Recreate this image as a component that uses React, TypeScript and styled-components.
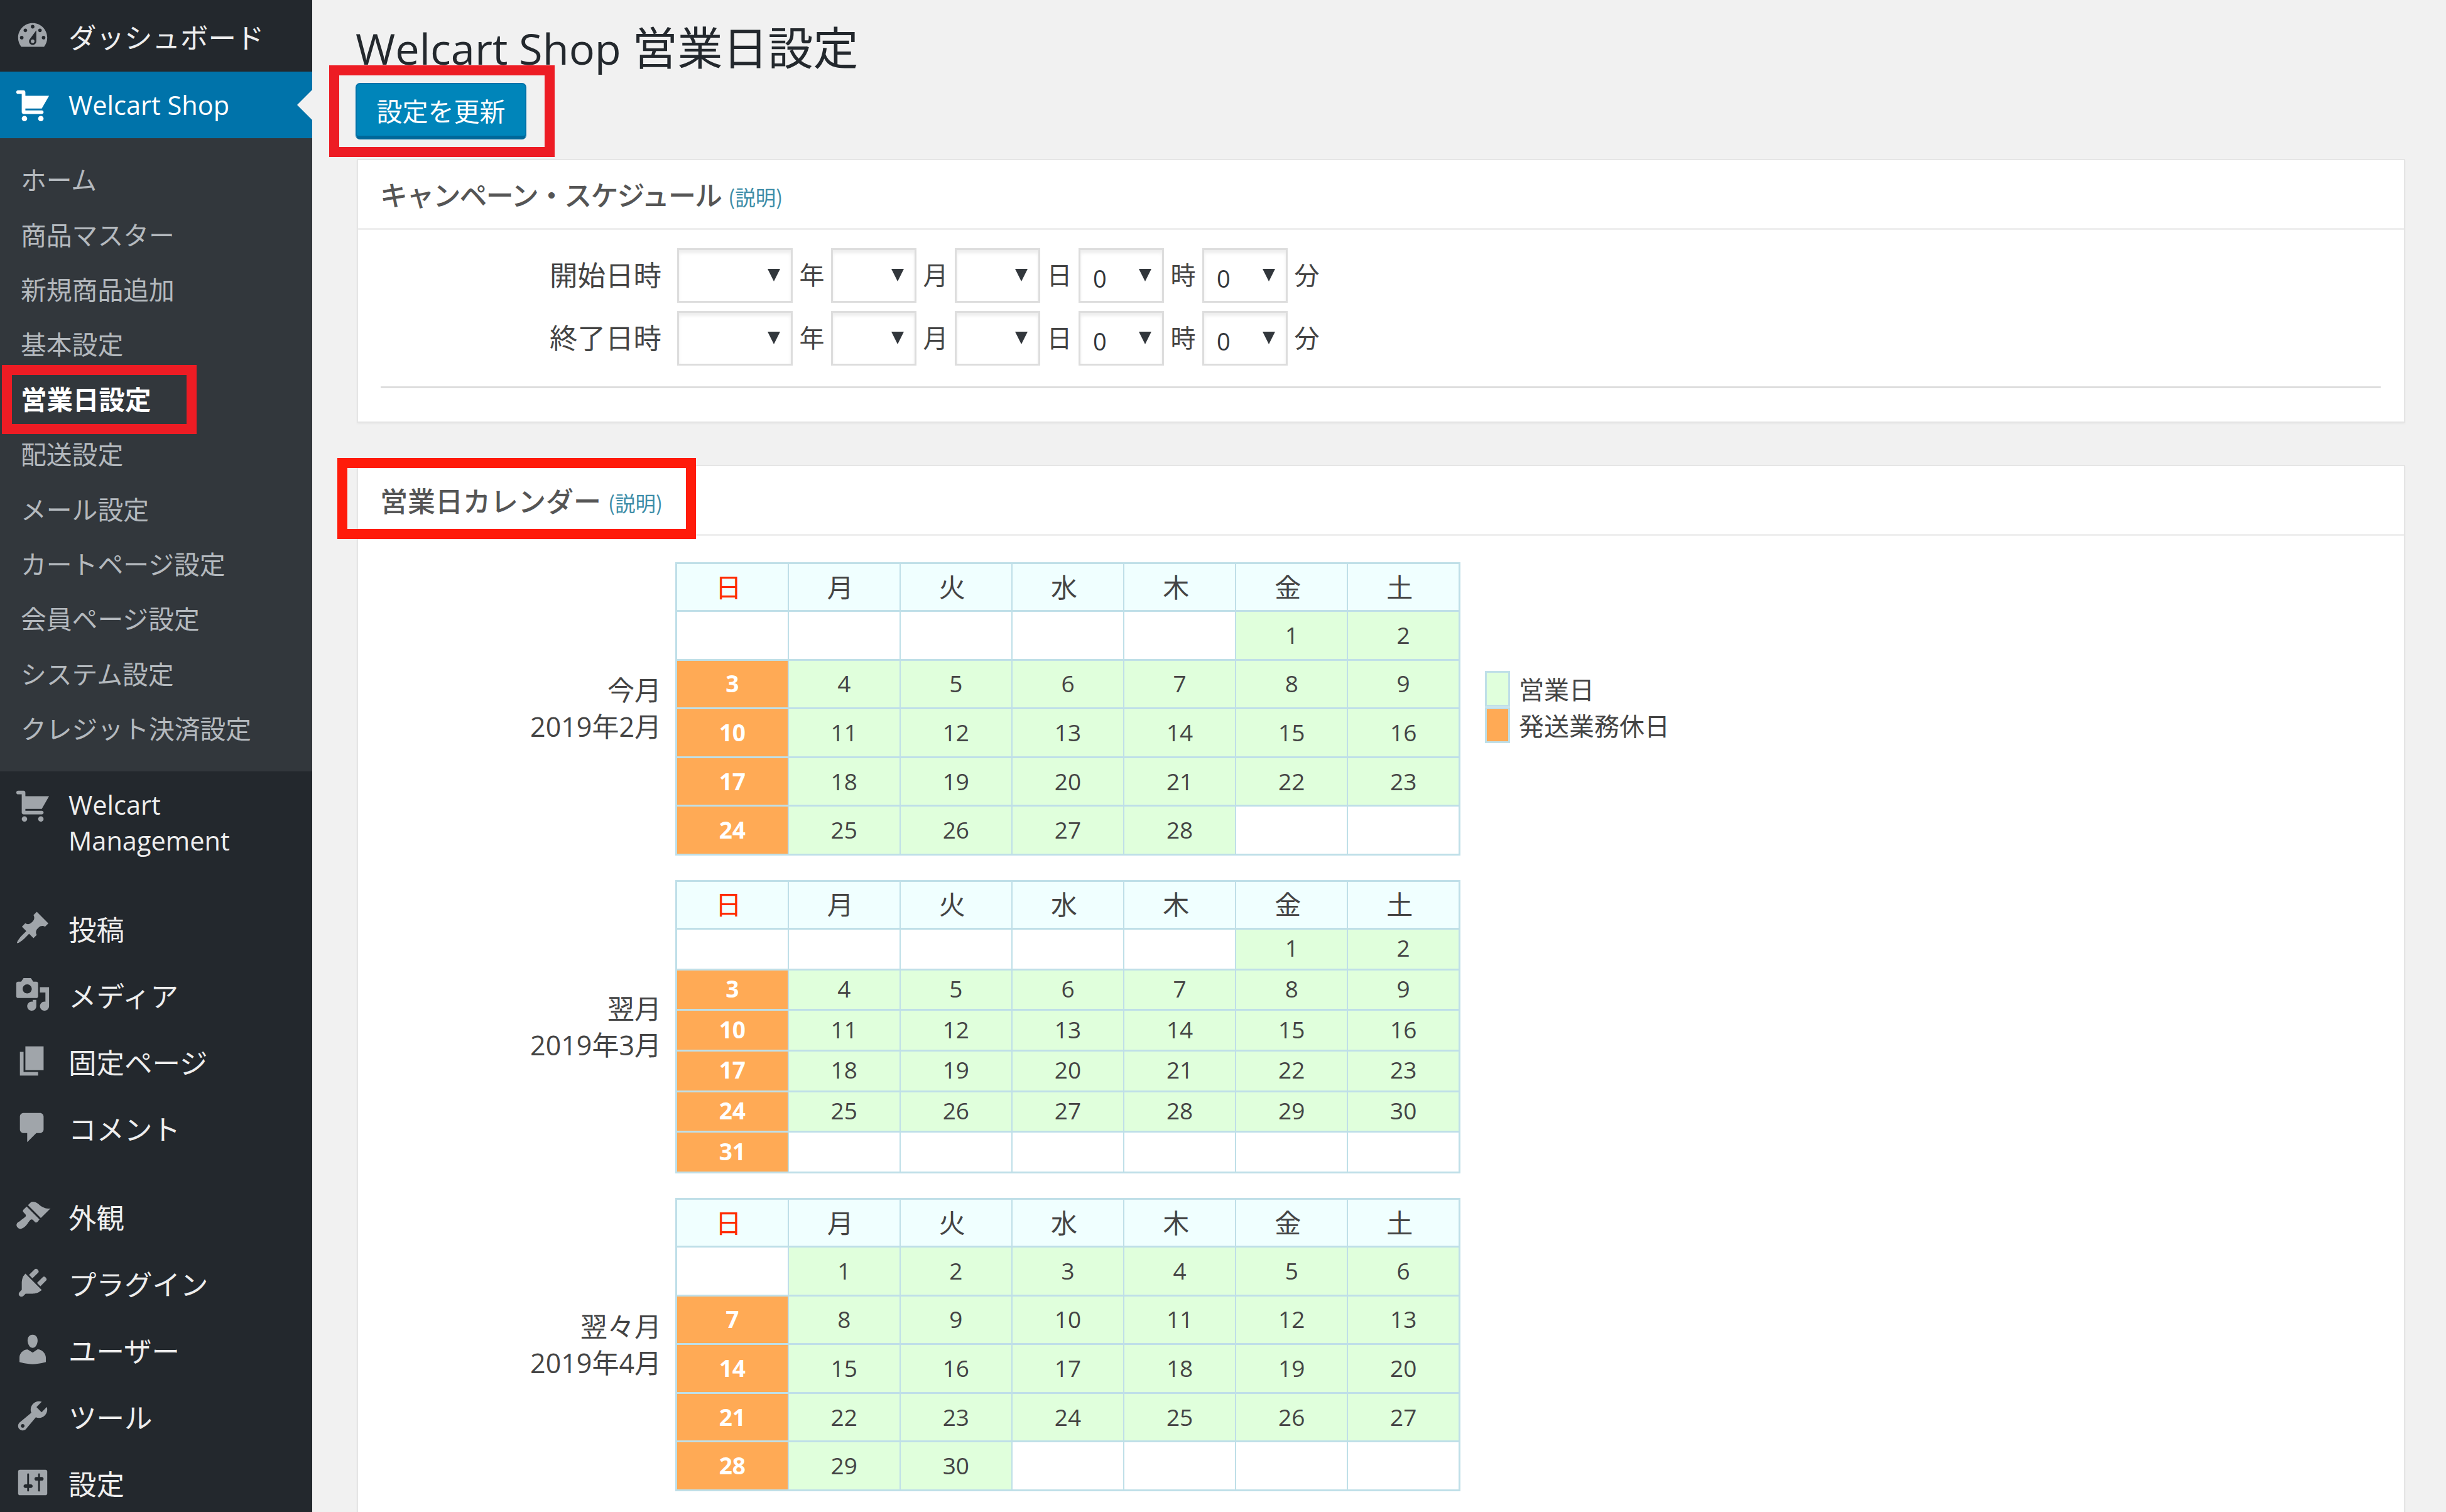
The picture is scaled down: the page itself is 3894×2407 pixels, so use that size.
import React from "react";
import styled, { createGlobalStyle } from "styled-components";

const JP = `"Noto Sans CJK JP", sans-serif`;
const LATIN = `"Open Sans", "Noto Sans CJK JP", sans-serif`;

const Global = createGlobalStyle`
  html, body { margin: 0; padding: 0; background: #f1f1f1; overflow: hidden; }
  #root { width: 3894px; height: 2407px; }
  * { box-sizing: border-box; }
`;

const Page = styled.div`
  display: flex;
  width: 3894px;
  height: 2407px;
  overflow: hidden;
  background: #f1f1f1;
  color: #444;
  font-family: ${LATIN};
`;

const Sidebar = styled.nav`
  flex: 0 0 497px;
  height: 2407px;
  overflow: hidden;
  background: #23282d;
`;

const MenuItem = styled.div<{ $active?: boolean; $h?: number; $gap?: number; $latin?: boolean }>`
  position: relative;
  display: flex;
  align-items: center;
  gap: 28px;
  padding-left: 23px;
  height: ${(p) => p.$h ?? 106}px;
  margin-top: ${(p) => p.$gap ?? 0}px;
  background: ${(p) => (p.$active ? "#0073aa" : "transparent")};
  color: ${(p) => (p.$active ? "#fff" : "#eee")};
  font-family: ${(p) => (p.$latin ? LATIN : JP)};
  font-size: ${(p) => (p.$latin ? 41.5 : 44.5)}px;
  line-height: 57px;
  svg { flex: 0 0 58px; width: 58px; height: 58px; fill: ${(p) => (p.$active ? "#fff" : "#a0a5aa")}; fill-rule: evenodd; }
  ${(p) =>
    p.$active
      ? `&::after { content: ""; position: absolute; right: 0; top: 29px; border: 24px solid transparent; border-left-width: 0; border-right: 24px solid #f1f1f1; }`
      : ""}
`;

const MenuLabel = styled.span`
  display: block;
`;

const IconAligned = styled(MenuItem)`
  align-items: flex-start;
  padding-top: 25px;
`;

const SubMenu = styled.div`
  background: #32373c;
  padding: 21px 0 26px;
`;

const SubItem = styled.div<{ $current?: boolean }>`
  position: relative;
  height: 87.4px;
  display: flex;
  align-items: center;
  padding-left: 33px;
  font-family: ${JP};
  font-size: ${(p) => (p.$current ? 41.5 : 40.8)}px;
  color: ${(p) => (p.$current ? "#fff" : "#b4b9be")};
  font-weight: ${(p) => (p.$current ? 700 : 400)};
`;

const Highlight = styled.div<{ $left: number; $top: number; $w: number; $h: number; $color: string }>`
  position: absolute;
  left: ${(p) => p.$left}px;
  top: ${(p) => p.$top}px;
  width: ${(p) => p.$w}px;
  height: ${(p) => p.$h}px;
  border: 16px solid ${(p) => p.$color};
  pointer-events: none;
  z-index: 5;
`;

const Main = styled.main`
  flex: 1;
  padding: 0 65px 0 69px;
`;

const Title = styled.h1`
  margin: 0;
  height: 132px;
  padding-top: 17px;
  font-family: ${LATIN};
  font-weight: 400;
  font-size: 68.5px;
  line-height: 110px;
  color: #23282d;
  white-space: nowrap;
`;

const TitleJp = styled.span`
  font-family: ${JP};
  font-size: 72px;
`;

const ButtonWrap = styled.div`
  position: relative;
  width: 272px;
  height: 90px;
  margin-bottom: 31px;
`;

const PrimaryButton = styled.button`
  display: block;
  width: 272px;
  height: 90px;
  padding: 0;
  background: #0085ba;
  border: 2px solid #0073aa;
  border-bottom: 6px solid #006799;
  border-radius: 7px;
  color: #fff;
  font-family: ${JP};
  font-size: 41px;
  line-height: 1;
`;

const Card = styled.section<{ $mb?: number }>`
  margin-left: 2px;
  background: #fff;
  border: 2px solid #e5e5e5;
  box-shadow: 0 2px 3px rgba(0, 0, 0, 0.04);
  margin-bottom: ${(p) => p.$mb ?? 0}px;
`;

const CardHeader = styled.header`
  position: relative;
  display: flex;
  align-items: center;
  gap: 11px;
  height: 111px;
  padding-left: 35px;
  border-bottom: 3px solid #eee;
`;

const CardTitle = styled.h2<{ $tight?: boolean }>`
  margin: 0;
  font-family: ${JP};
  font-size: 44px;
  font-weight: 500;
  color: #555;
  letter-spacing: ${(p) => (p.$tight ? "-1.8px" : "0")};
`;

const HelpLink = styled.span`
  font-family: ${JP};
  font-size: 32.5px;
  color: #3d8da8;
  padding-top: 6px;
`;

const FormBody = styled.div`
  padding: 29px 37px 53px 36px;
`;

const ScheduleRows = styled.div`
  display: grid;
  gap: 13px;
  padding-bottom: 33px;
  border-bottom: 3px solid #ddd;
`;

const ScheduleRow = styled.div`
  display: flex;
  align-items: center;
  height: 87px;
`;

const RowLabel = styled.label`
  width: 447px;
  margin-right: 25px;
  padding-bottom: 6px;
  text-align: right;
  font-family: ${JP};
  font-size: 44.5px;
  color: #444;
`;

const SelectWrap = styled.span<{ $w: number }>`
  position: relative;
  display: block;
  width: ${(p) => p.$w}px;
  height: 87px;
  &::after {
    content: "";
    position: absolute;
    right: 20px;
    top: 33px;
    border-style: solid;
    border-width: 20px 10px 0;
    border-color: #32373c transparent transparent;
  }
`;

const PlainSelect = styled.select`
  appearance: none;
  width: 100%;
  height: 100%;
  padding: 8px 0 0 20px;
  background: #fff;
  border: 3px solid #ddd;
  border-radius: 0;
  box-shadow: inset 0 5px 5px rgba(0, 0, 0, 0.07);
  font-family: ${LATIN};
  font-size: 38px;
  color: #32373c;
`;

const Unit = styled.span`
  width: 61px;
  padding-bottom: 6px;
  text-align: center;
  font-family: ${JP};
  font-size: 40px;
  color: #444;
`;

const CalendarBody = styled.div`
  padding: 42px 36px 80px;
  display: grid;
  gap: 39px;
`;

const CalendarRow = styled.div`
  display: flex;
  align-items: center;
  gap: 22px;
`;

const MonthLabel = styled.div`
  width: 447px;
  text-align: right;
  font-family: ${LATIN};
  font-size: 43px;
  line-height: 58px;
  color: #444;
`;

const Table = styled.table`
  width: 1250px;
  table-layout: fixed;
  border-collapse: collapse;
  border: 3px solid #bfdfe8;
`;

const HeadCell = styled.th<{ $sun?: boolean }>`
  height: 76px;
  padding: 0 12px 5px 0;
  background: #f0ffff;
  border-width: 3px 2px;
  border-style: solid;
  border-color: #bfdfe8;
  font-family: ${JP};
  font-size: 42px;
  font-weight: 400;
  color: ${(p) => (p.$sun ? "#ff2a00" : "#444")};
`;

const DayCell = styled.td<{ $kind: "empty" | "open" | "off"; $h: number; $lift: number }>`
  height: ${(p) => p.$h}px;
  padding: 0 0 ${(p) => p.$lift}px;
  text-align: center;
  border-width: 3px 2px;
  border-style: solid;
  border-color: #bfdfe8;
  font-size: 37px;
  background: ${(p) => (p.$kind === "off" ? "#ffaa55" : p.$kind === "open" ? "#e0ffdc" : "#fff")};
  color: ${(p) => (p.$kind === "off" ? "#fff" : "#444")};
  font-weight: ${(p) => (p.$kind === "off" ? 700 : 400)};
`;

const Legend = styled.div`
  display: grid;
  grid-template-columns: 40px auto;
  column-gap: 14px;
  margin-left: 17px;
  margin-bottom: 6px;
  align-items: center;
  font-family: ${JP};
  font-size: 40px;
  color: #444;
`;

const Swatch = styled.span<{ $color: string }>`
  width: 40px;
  height: 57px;
  background: ${(p) => p.$color};
  border: 3px solid #bfdfe8;
`;

const ICONS: Record<string, string> = {
  dashboard:
    "M3.76 16h12.48c1.1-1.37 1.76-3.11 1.76-5 0-4.42-3.58-8-8-8s-8 3.58-8 8c0 1.89.66 3.63 1.76 5zM10 4c.55 0 1 .45 1 1s-.45 1-1 1-1-.45-1-1 .45-1 1-1zM6 6c.55 0 1 .45 1 1s-.45 1-1 1-1-.45-1-1 .45-1 1-1zm8 0c.55 0 1 .45 1 1s-.45 1-1 1-1-.45-1-1 .45-1 1-1zm-5.37 5.55L12 7v6c0 1.1-.9 2-2 2s-2-.9-2-2c0-.57.24-1.08.63-1.45zM4 10c.55 0 1 .45 1 1s-.45 1-1 1-1-.45-1-1 .45-1 1-1zm12 0c.55 0 1 .45 1 1s-.45 1-1 1-1-.45-1-1 .45-1 1-1zm-5 3c0-.55-.45-1-1-1s-1 .45-1 1 .45 1 1 1 1-.45 1-1z",
  cart:
    "M6 13h9c.55 0 1 .45 1 1s-.45 1-1 1H5c-.55 0-1-.45-1-1V4H2c-.55 0-1-.45-1-1s.45-1 1-1h3c.55 0 1 .45 1 1v2h13l-4 7H6v1zm-.5 3c.83 0 1.5.67 1.5 1.5S6.33 19 5.5 19 4 18.33 4 17.5 4.67 16 5.5 16zm9 0c.83 0 1.5.67 1.5 1.5s-.67 1.5-1.5 1.5-1.5-.67-1.5-1.5.67-1.5 1.5-1.5z",
  pin: "M10.44 3.02l1.82-1.82 6.36 6.35-1.83 1.82c-1.05-.68-2.48-.57-3.41.36l-.75.75c-.92.93-1.04 2.35-.35 3.41l-1.83 1.82-2.41-2.41-2.8 2.79c-.42.42-3.38 2.71-3.8 2.29s1.86-3.39 2.28-3.81l2.79-2.79L4.1 9.36l1.83-1.82c1.05.69 2.48.57 3.4-.36l.75-.75c.93-.92 1.05-2.35.36-3.41z",
  media:
    "M13 11V4c0-.55-.45-1-1-1h-1.67L9 1H5L3.67 3H2c-.55 0-1 .45-1 1v7c0 .55.45 1 1 1h10c.55 0 1-.45 1-1zM7 4.5c1.38 0 2.5 1.12 2.5 2.5S8.38 9.5 7 9.5 4.5 8.38 4.5 7 5.62 4.5 7 4.5zM14 6h5v10.5c0 1.38-1.12 2.5-2.5 2.5S14 17.88 14 16.5s1.12-2.5 2.5-2.5c.17 0 .34.02.5.05V9h-3V6zm-4 8.05V13h2v3.5c0 1.38-1.12 2.5-2.5 2.5S7 17.88 7 16.5 8.12 14 9.5 14c.17 0 .34.02.5.05z",
  page: "M6 15V2h10v13H6zm-1 1h8v2H3V5h2v11z",
  comment: "M5 2h9c1.1 0 2 .9 2 2v7c0 1.1-.9 2-2 2h-2l-5 5v-5H5c-1.1 0-2-.9-2-2V4c0-1.1.9-2 2-2z",
  brush:
    "M14.48 11.06L7.41 3.99l1.5-1.5c.5-.56 2.3-.47 3.51.32 1.21.8 1.43 1.28 2.91 2.1 1.18.64 2.45 1.26 4.45.85zm-.71.71L6.7 4.7 4.93 6.47c-.39.39-.39 1.02 0 1.41l1.06 1.06c.39.39.39 1.03 0 1.42-.6.6-1.43 1.11-2.21 1.69-.35.26-.7.53-1.01.84C1.43 13.23.4 14.9 1.8 16.3s3.07.36 4.4-.97c.3-.31.57-.66.84-1.01.57-.78 1.08-1.61 1.69-2.21.39-.39 1.02-.39 1.41 0l1.06 1.06c.39.39 1.02.39 1.41 0z",
  plugin:
    "M13.11 4.36L9.87 7.6 8 5.73l3.24-3.24c.35-.34 1.05-.2 1.56.32.52.51.66 1.21.31 1.55zm-8 1.77l.91-1.12 9.01 9.01-1.19.84c-.71.71-2.63 1.16-3.82 1.16H6.14L4.9 17.26c-.59.59-1.54.59-2.12 0-.59-.58-.59-1.53 0-2.12l1.24-1.24v-3.88c0-1.13.4-3.19 1.09-3.89zm7.26 3.97l3.24-3.24c.34-.35 1.04-.21 1.55.31.52.51.66 1.21.31 1.55l-3.24 3.25z",
  user:
    "M10 9.25c-2.27 0-2.73-3.44-2.73-3.44C7 4.02 7.82 2 9.97 2c2.16 0 2.98 2.02 2.71 3.81 0 0-.41 3.44-2.68 3.44zm0 2.57L12.72 10c2.39 0 4.52 2.33 4.52 4.53v2.49s-3.65 1.13-7.24 1.13c-3.65 0-7.24-1.13-7.24-1.13v-2.49c0-2.25 1.94-4.48 4.47-4.48z",
  tools:
    "M16.68 9.77c-1.34 1.34-3.3 1.67-4.95.99l-5.41 6.52c-.99.99-2.59.99-3.58 0s-.99-2.59 0-3.57l6.52-5.42c-.68-1.65-.35-3.61.99-4.95 1.28-1.28 3.12-1.62 4.72-1.06l-2.89 2.89 2.82 2.82 2.86-2.87c.53 1.58.18 3.39-1.08 4.65zM3.81 16.21c.4.39 1.04.39 1.43 0 .4-.4.4-1.04 0-1.43-.39-.4-1.03-.4-1.43 0-.39.39-.39 1.03 0 1.43z",
  settings:
    "M18 16V4c0-.55-.45-1-1-1H3c-.55 0-1 .45-1 1v12c0 .55.45 1 1 1h14c.55 0 1-.45 1-1zM8 11h1c.55 0 1 .45 1 1s-.45 1-1 1H8v1.5c0 .28-.22.5-.5.5s-.5-.22-.5-.5V13H6c-.55 0-1-.45-1-1s.45-1 1-1h1V5.5c0-.28.22-.5.5-.5s.5.22.5.5V11zm5-2h-1c-.55 0-1-.45-1-1s.45-1 1-1h1V5.5c0-.28.22-.5.5-.5s.5.22.5.5V7h1c.55 0 1 .45 1 1s-.45 1-1 1h-1v5.5c0 .28-.22.5-.5.5s-.5-.22-.5-.5V9z",
};

const Icon = ({ name }: { name: string }) => (
  <svg viewBox="0 0 20 20" aria-hidden="true">
    <path d={ICONS[name]} />
  </svg>
);

const SUB_ITEMS = [
  "ホーム",
  "商品マスター",
  "新規商品追加",
  "基本設定",
  "営業日設定",
  "配送設定",
  "メール設定",
  "カートページ設定",
  "会員ページ設定",
  "システム設定",
  "クレジット決済設定",
];

const LOWER_ITEMS = [
  { icon: "pin", label: "投稿", gap: 34 },
  { icon: "media", label: "メディア" },
  { icon: "page", label: "固定ページ" },
  { icon: "comment", label: "コメント" },
  { icon: "brush", label: "外観", gap: 35 },
  { icon: "plugin", label: "プラグイン" },
  { icon: "user", label: "ユーザー" },
  { icon: "tools", label: "ツール" },
  { icon: "settings", label: "設定" },
];

const WEEK = ["日", "月", "火", "水", "木", "金", "土"];

const MONTHS = [
  { title: "今月", date: "2019年2月", first: 5, days: 28, rows: 5, rowH: 77.6, lift: 2 },
  { title: "翌月", date: "2019年3月", first: 5, days: 31, rows: 6, rowH: 64.7, lift: 4 },
  { title: "翌々月", date: "2019年4月", first: 1, days: 30, rows: 5, rowH: 77.6, lift: 2 },
];

const FIELDS = [
  { w: 184, unit: "年", value: "" },
  { w: 136, unit: "月", value: "" },
  { w: 136, unit: "日", value: "" },
  { w: 136, unit: "時", value: "0" },
  { w: 136, unit: "分", value: "0" },
];

const Month = ({ first, days, rows, rowH, lift }: { first: number; days: number; rows: number; rowH: number; lift: number }) => (
  <Table>
    <thead>
      <tr>
        {WEEK.map((d, i) => (
          <HeadCell key={d} $sun={i === 0}>
            {d}
          </HeadCell>
        ))}
      </tr>
    </thead>
    <tbody>
      {Array.from({ length: rows }, (_, r) => (
        <tr key={r}>
          {WEEK.map((_, c) => {
            const day = r * 7 + c - first + 1;
            const valid = day >= 1 && day <= days;
            const kind = !valid ? "empty" : c === 0 ? "off" : "open";
            return (
              <DayCell key={c} $kind={kind} $h={rowH} $lift={lift}>
                {valid ? day : ""}
              </DayCell>
            );
          })}
        </tr>
      ))}
    </tbody>
  </Table>
);

const Schedule = ({ label }: { label: string }) => (
  <ScheduleRow>
    <RowLabel>{label}</RowLabel>
    {FIELDS.map((f) => (
      <React.Fragment key={f.unit}>
        <SelectWrap $w={f.w}>
          <PlainSelect defaultValue={f.value}>
            <option value={f.value}>{f.value}</option>
          </PlainSelect>
        </SelectWrap>
        <Unit>{f.unit}</Unit>
      </React.Fragment>
    ))}
  </ScheduleRow>
);

export default function App() {
  return (
    <Page>
      <Global />
      <Sidebar>
        <MenuItem $h={114}>
          <Icon name="dashboard" />
          <MenuLabel>ダッシュボード</MenuLabel>
        </MenuItem>
        <MenuItem $active $latin>
          <Icon name="cart" />
          <MenuLabel>Welcart Shop</MenuLabel>
        </MenuItem>
        <SubMenu>
          {SUB_ITEMS.map((s) => (
            <SubItem key={s} $current={s === "営業日設定"}>
              {s}
              {s === "営業日設定" && <Highlight $left={3} $top={-10} $w={310} $h={110} $color="#ed1c24" />}
            </SubItem>
          ))}
        </SubMenu>
        <IconAligned $latin $h={162}>
          <Icon name="cart" />
          <MenuLabel>
            Welcart
            <br />
            Management
          </MenuLabel>
        </IconAligned>
        {LOWER_ITEMS.map((m) => (
          <MenuItem key={m.label} $gap={m.gap}>
            <Icon name={m.icon} />
            <MenuLabel>{m.label}</MenuLabel>
          </MenuItem>
        ))}
      </Sidebar>
      <Main>
        <Title>
          Welcart Shop <TitleJp>営業日設定</TitleJp>
        </Title>
        <ButtonWrap>
          <PrimaryButton type="button">設定を更新</PrimaryButton>
          <Highlight $left={-42} $top={-28} $w={359} $h={146} $color="#ed1c24" />
        </ButtonWrap>
        <Card $mb={67}>
          <CardHeader>
            <CardTitle $tight>キャンペーン・スケジュール</CardTitle>
            <HelpLink>(説明)</HelpLink>
          </CardHeader>
          <FormBody>
            <ScheduleRows>
              <Schedule label="開始日時" />
              <Schedule label="終了日時" />
            </ScheduleRows>
          </FormBody>
        </Card>
        <Card>
          <CardHeader>
            <CardTitle>営業日カレンダー</CardTitle>
            <HelpLink>(説明)</HelpLink>
            <Highlight $left={-33} $top={-13} $w={571} $h={129} $color="#ff1b0a" />
          </CardHeader>
          <CalendarBody>
            {MONTHS.map((m, i) => (
              <CalendarRow key={m.title}>
                <MonthLabel>
                  {m.title}
                  <br />
                  {m.date}
                </MonthLabel>
                <Month first={m.first} days={m.days} rows={m.rows} rowH={m.rowH} lift={m.lift} />
                {i === 0 && (
                  <Legend>
                    <Swatch $color="#e0ffdc" />
                    <span>営業日</span>
                    <Swatch $color="#ffaa55" />
                    <span>発送業務休日</span>
                  </Legend>
                )}
              </CalendarRow>
            ))}
          </CalendarBody>
        </Card>
      </Main>
    </Page>
  );
}
